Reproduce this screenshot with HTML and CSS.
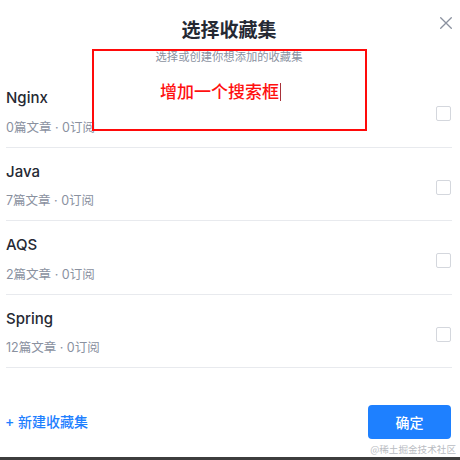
FILE: index.html
```html
<!DOCTYPE html>
<html lang="zh">
<head>
<meta charset="utf-8">
<title>选择收藏集</title>
<link rel="stylesheet" href="styles.css">
</head>
<body>
<div class="modal">
  <div class="header">
    <div class="title">选择收藏集</div>
    <div class="subtitle">选择或创建你想添加的收藏集</div>
    <button class="close" aria-label="关闭">
      <svg width="12" height="12" viewBox="0 0 12 12"><path d="M0.7 0.7L11.3 11.3M11.3 0.7L0.7 11.3" stroke="#8a919f" stroke-width="1.3" fill="none" stroke-linecap="round"/></svg>
    </button>
  </div>
  <div class="note"><span class="note-text">增加一个搜索框</span><span class="caret"></span></div>
  <ul class="list">
    <li class="item">
      <div class="info"><div class="name">Nginx</div><div class="meta">0篇文章 · 0订阅</div></div>
      <span class="check"></span>
    </li>
    <li class="item">
      <div class="info"><div class="name">Java</div><div class="meta">7篇文章 · 0订阅</div></div>
      <span class="check"></span>
    </li>
    <li class="item">
      <div class="info"><div class="name">AQS</div><div class="meta">2篇文章 · 0订阅</div></div>
      <span class="check"></span>
    </li>
    <li class="item">
      <div class="info"><div class="name">Spring</div><div class="meta">12篇文章 · 0订阅</div></div>
      <span class="check"></span>
    </li>
  </ul>
  <div class="footer">
    <a class="create">+ 新建收藏集</a>
    <button class="confirm">确定</button>
  </div>
  <div class="bar"></div>
  <div class="watermark">@稀土掘金技术社区</div>
</div>
</body>
</html>
```
FILE: styles.css
```css
* { box-sizing: border-box; }
html, body { margin: 0; padding: 0; background: #fff; }
body {
  font-family: Inter, "Noto Sans CJK SC", sans-serif;
  color: #252933;
}
.modal {
  position: relative;
  width: 460px;
  height: 460px;
  display: flex;
  flex-direction: column;
  padding: 0 8px 0 6px;
  overflow: hidden;
}
.header {
  padding-top: 18px;
  text-align: center;
}
.title {
  font-size: 19px;
  line-height: 26px;
  font-weight: 700;
  color: #252933;
}
.subtitle {
  margin-top: 5px;
  font-size: 11.3px;
  line-height: 16px;
  color: #8a919f;
}
.close {
  position: absolute;
  top: 16px;
  right: 7px;
  width: 14px;
  height: 14px;
  padding: 1px;
  border: 0;
  background: none;
  display: flex;
}
.note {
  position: absolute;
  left: 92px;
  top: 49px;
  width: 275px;
  height: 82px;
  border: 2px solid #ff0a0a;
  padding: 30px 0 0 66px;
  display: flex;
  align-items: flex-start;
}
.note-text {
  font-size: 17px;
  line-height: 22px;
  color: #ff1010;
  font-weight: 500;
  letter-spacing: 0;
}
.caret {
  width: 1px;
  height: 18px;
  margin-top: 2px;
  margin-left: 1px;
  background: #a8323a;
}
.list {
  list-style: none;
  margin: 9px 0 0;
  padding: 0;
}
.item {
  display: flex;
  align-items: center;
  justify-content: space-between;
  padding: 13px 0 10px;
  border-bottom: 1px solid #e8eaee;
  height: 73.5px;
}
.name {
  font-size: 15px;
  line-height: 22px;
  font-weight: 500;
  color: #252933;
}
.meta {
  margin-top: 9.5px;
  font-size: 12.5px;
  line-height: 18px;
  color: #8a919f;
}
.check {
  width: 15px;
  height: 15px;
  border: 1.5px solid #d4d7dd;
  border-radius: 2px;
  margin-top: 4px;
  margin-right: 1px;
}
.footer {
  margin-top: 36.5px;
  display: flex;
  align-items: center;
  justify-content: space-between;
}
.create {
  font-size: 14px;
  line-height: 20px;
  font-weight: 500;
  color: #1e80ff;
  margin-left: -1px;
}
.confirm {
  width: 83px;
  height: 34px;
  margin-right: 1px;
  border: 0;
  border-radius: 4px;
  background: #1e80ff;
  color: #fff;
  font-family: Inter, "Noto Sans CJK SC", sans-serif;
  font-size: 14px;
  font-weight: 500;
}
.bar {
  margin: auto -8px 0 -6px;
  height: 3px;
  background: #3d3d3d;
}
.watermark {
  position: absolute;
  right: 4px;
  bottom: 5px;
  font-size: 9.6px;
  line-height: 12px;
  color: #b9bcc2;
  font-family: "Noto Sans CJK SC", sans-serif;
}
```
